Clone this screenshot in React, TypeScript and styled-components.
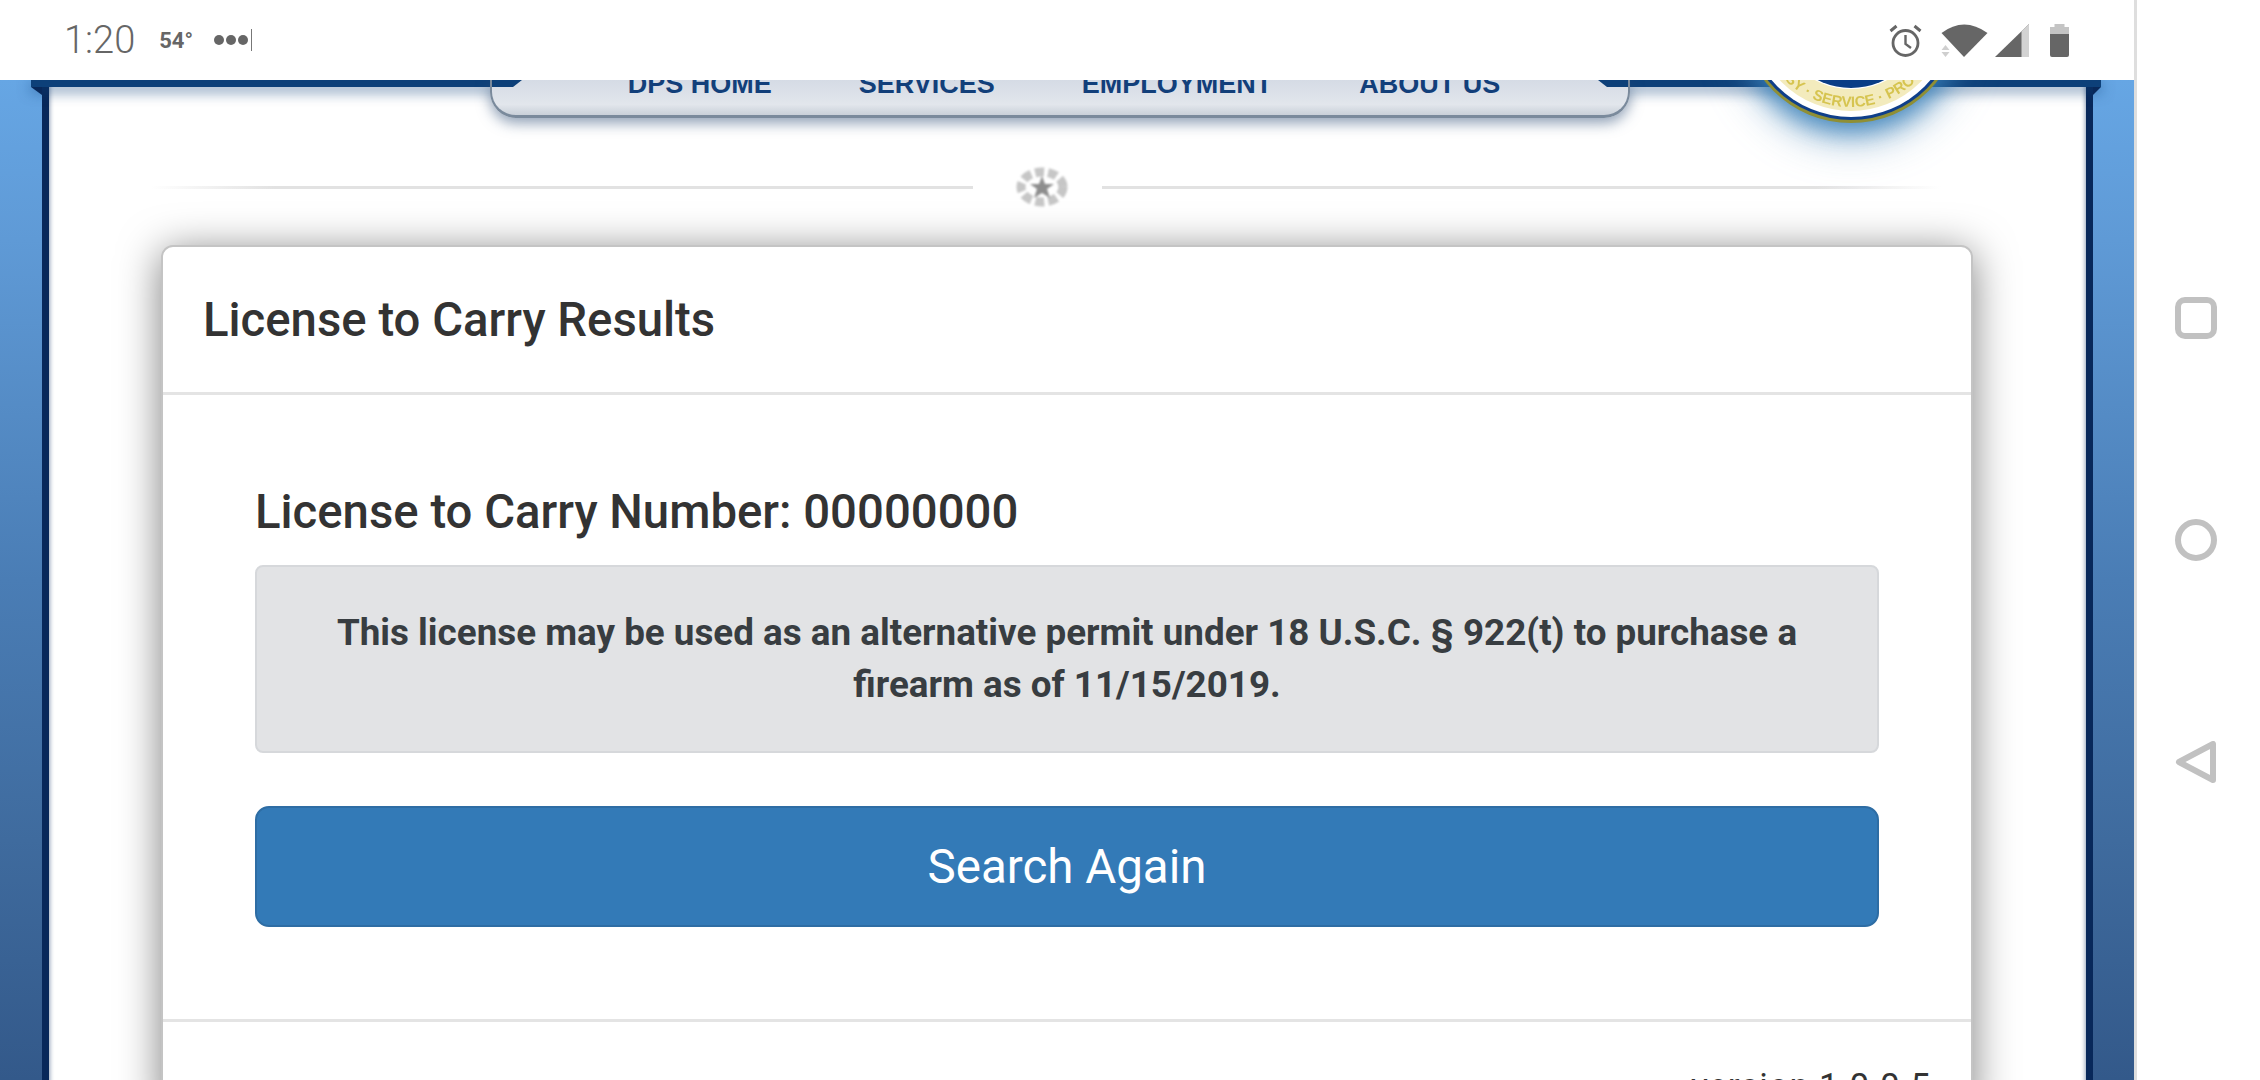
import React from 'react';
import styled, { createGlobalStyle } from 'styled-components';

const GlobalStyle = createGlobalStyle`
  html, body {
    margin: 0;
    padding: 0;
    background: #fff;
    overflow: hidden;
  }
`;

const Device = styled.div`
  width: 2260px;
  height: 1080px;
  display: flex;
  overflow: hidden;
  font-family: Roboto, sans-serif;
`;

const Screen = styled.div`
  width: 2134px;
  display: flex;
  flex-direction: column;
  border-right: 3px solid #dedede;
`;

const StatusBar = styled.div`
  position: relative;
  z-index: 2;
  height: 80px;
  flex: none;
  box-sizing: border-box;
  padding: 0 65px 0 64px;
  display: flex;
  align-items: center;
  background: #fff;
  color: #666;
`;

const Clock = styled.span`
  font-size: 38px;
  font-weight: 300;
  margin-right: 24px;
`;

const Temp = styled.span`
  font-size: 22px;
  font-weight: 700;
  margin-right: 21px;
`;

const Dots = styled.span`
  display: flex;
  align-items: center;
  gap: 2px;
  flex: 1;
`;

const Dot = styled.i`
  width: 10px;
  height: 10px;
  border-radius: 50%;
  background: #666;
`;

const Tick = styled.i`
  width: 1px;
  height: 22px;
  margin-left: 1px;
  background: #777;
`;

const StatusIcons = styled.div`
  display: flex;
  align-items: center;
`;

const Backdrop = styled.div`
  flex: 1;
  min-height: 0;
  padding: 0 41px 0 42px;
  background: linear-gradient(#66a6e4 0, #5f9ad6 160px, #4a7db5 500px, #3f6b9e 760px, #33598a 1000px);
`;

const Panel = styled.div`
  position: relative;
  height: 1100px;
  background: #fff;
  border-left: 7px solid #08285a;
  border-right: 7px solid #08285a;
  box-shadow: inset 4px 0 4px -3px rgba(11, 47, 98, 0.45), inset -4px 0 4px -3px rgba(11, 47, 98, 0.45);
`;

const TopBar = styled.div`
  position: relative;
  height: 7px;
  margin: 0 -15px 0 -18px;
  background: #0d4079;
  box-shadow: 0 4px 14px rgba(13, 64, 121, 0.7);

  &::before,
  &::after {
    content: '';
    position: absolute;
    top: 7px;
    border-top: 8px solid #08285a;
  }

  &::before {
    left: 0;
    border-right: 11px solid transparent;
    transform: scaleX(-1);
  }

  &::after {
    right: 0;
    border-right: 8px solid transparent;
  }
`;

const NavTab = styled.nav`
  width: 1140px;
  height: 38px;
  margin: -7px 0 0 441px;
  padding-left: 8px;
  position: relative;
  box-sizing: border-box;
  display: flex;
  justify-content: center;
  gap: 87px;
  overflow: hidden;
  background: linear-gradient(#d5dbe5, #e2e6ec 70%, #c9d0d9);
  border: solid #7a8a9c;
  border-width: 0 2px 3px;
  border-radius: 0 0 26px 26px;
  box-shadow: 0 5px 14px rgba(50, 80, 120, 0.55);

  &::before,
  &::after {
    content: '';
    position: absolute;
    top: 0;
    width: 30px;
    height: 7px;
    background: #0d4079;
  }

  &::before {
    left: 0;
    clip-path: polygon(0 0, 100% 0, 70% 100%, 0 100%);
  }

  &::after {
    right: 0;
    clip-path: polygon(0 0, 100% 0, 100% 100%, 30% 100%);
  }
`;

const NavLink = styled.span`
  font-family: "Liberation Sans", Arial, sans-serif;
  font-weight: 700;
  font-size: 27px;
  line-height: 27px;
  margin-top: -9px;
  color: #123f7a;
  white-space: nowrap;
`;

const Seal = styled.svg`
  position: absolute;
  left: 1692px;
  top: -177px;
  filter: blur(0.7px) drop-shadow(0 8px 12px rgba(50, 125, 185, 0.85)) drop-shadow(0 10px 18px rgba(70, 130, 180, 0.45));
`;

const Divider = styled.div`
  margin: 49px 145px 0 102px;
  height: 32px;
  display: grid;
  grid-template-columns: 822px 129px 1fr;
  align-items: center;
`;

const Rule = styled.div<{ $flip?: boolean }>`
  height: 3px;
  background: linear-gradient(${(p) => (p.$flip ? '270deg' : '90deg')}, rgba(222, 222, 222, 0), #e2e2e2 15%);
`;

const BadgeSlot = styled.div`
  display: flex;
  justify-content: center;
  padding-left: 9px;
`;

const Card = styled.section`
  width: 1812px;
  margin: 46px 0 0 112px;
  box-sizing: border-box;
  background: #fff;
  border: 2px solid #c4c4c4;
  border-radius: 12px 12px 0 0;
  box-shadow: 0 6px 42px rgba(0, 0, 0, 0.5);
`;

const CardHeader = styled.header`
  height: 148px;
  box-sizing: border-box;
  padding-left: 40px;
  display: flex;
  align-items: center;
  border-bottom: 3px solid #e4e4e4;
  font-size: 47.3px;
  font-weight: 500;
  color: #333;
`;

const CardBody = styled.div`
  height: 627px;
  box-sizing: border-box;
  padding: 90px 92px 0;
  border-bottom: 3px solid #e4e4e4;
`;

const LicenseNumber = styled.h3`
  margin: 0 0 26px;
  font-size: 47.3px;
  line-height: 54px;
  font-weight: 500;
  color: #333;
`;

const Notice = styled.div`
  height: 188px;
  box-sizing: border-box;
  padding: 0 60px;
  display: flex;
  align-items: center;
  justify-content: center;
  text-align: center;
  background: #e2e3e5;
  border: 2px solid #d6d8db;
  border-radius: 8px;
  font-size: 36.8px;
  line-height: 52px;
  font-weight: 700;
  color: #383d41;
`;

const SearchButton = styled.button`
  width: 100%;
  height: 121px;
  margin-top: 53px;
  border: 2px solid #2e6da4;
  border-radius: 14px;
  background: #337ab7;
  color: #fff;
  font-family: Roboto, sans-serif;
  font-size: 47.5px;
`;

const Version = styled.div`
  padding: 42px 40px 0 0;
  text-align: right;
  font-size: 35px;
  line-height: 46px;
  letter-spacing: 0.8px;
  color: #333;
`;

const NavRail = styled.div`
  flex: 1;
  display: flex;
  flex-direction: column;
  align-items: center;
  padding: 297px 5px 0 0;
  gap: 180px;
  background: #fff;
`;

const Alarm = () => (
  <svg width="33" height="33" viewBox="0 0 33 33" fill="none" stroke="#666" strokeWidth="2.8" style={{ marginRight: 19 }}>
    <circle cx="16.500" cy="19" r="12.500" />
    <path d="M16.500 11v9l5.500 4" strokeWidth="2.400" />
    <path d="M1.500 7l6-5M31.500 7l-6-5" strokeWidth="3" />
  </svg>
);

const Wifi = () => (
  <svg width="47" height="33" viewBox="0 0 47 33" style={{ marginRight: 7 }}>
    <path d="M23 33L0.500 9Q23-8 46.500 9z" fill="#666" />
    <path d="M4.500 21l4 5h-8zM4.500 33l4-5h-8z" fill="#cfcfcf" />
  </svg>
);

const Signal = () => (
  <svg width="34" height="33" viewBox="0 0 34 33" style={{ marginRight: 21 }}>
    <path d="M0 33L34 0v33z" fill="#666" />
    <path d="M26.500 7.300L34 0v33h-7.500z" fill="#d2d2d2" />
  </svg>
);

const Battery = () => (
  <svg width="19" height="33" viewBox="0 0 19 33">
    <path d="M4.500 0h10v3h4.500v8H0V3h4.500z" fill="#c4c4c4" />
    <path d="M0 10h19v21a2 2 0 0 1-2 2H2a2 2 0 0 1-2-2z" fill="#666" />
  </svg>
);

const NavSquare = () => (
  <svg width="42" height="42" viewBox="0 0 42 42" fill="none" stroke="#c1c1c1" strokeWidth="6">
    <rect x="3" y="3" width="36" height="36" rx="7" />
  </svg>
);

const NavCircle = () => (
  <svg width="42" height="42" viewBox="0 0 42 42" fill="none" stroke="#c1c1c1" strokeWidth="6">
    <circle cx="21" cy="21" r="18" />
  </svg>
);

const NavBack = () => (
  <svg width="42" height="42" viewBox="0 0 42 42" fill="none" stroke="#c1c1c1" strokeWidth="6" strokeLinejoin="round">
    <path d="M38 3v36L4 21z" />
  </svg>
);

const StarBadge = () => (
  <svg width="52" height="40" viewBox="0 0 52 40" style={{ filter: 'blur(1.2px)' }}>
    <ellipse cx="26" cy="20" rx="21" ry="15" fill="none" stroke="#c6c6c6" strokeWidth="9" strokeDasharray="9 4" />
    <path d="M26 9l3 8h9l-7 5 3 9-8-5-8 5 3-9-7-5h9z" fill="#8d8d8d" />
  </svg>
);

const SealMark = () => (
  <Seal width="220" height="220" viewBox="0 0 220 220">
    <circle cx="110" cy="110" r="110" fill="#8f8f35" />
    <circle cx="110" cy="110" r="107" fill="#0f3f8a" />
    <circle cx="110" cy="110" r="104" fill="#fff" />
    <circle cx="110" cy="110" r="87" fill="none" stroke="#f3ebbd" strokeWidth="22" />
    <circle cx="110" cy="110" r="75" fill="#0a3d86" />
    <circle cx="110" cy="110" r="67" fill="#8a8a5c" />
    <defs>
      <path id="seal-arc" d="M16 110a94 94 0 0 0 188 0" />
    </defs>
    <text fontFamily="Liberation Sans, sans-serif" fontSize="15" fontWeight="700" fill="#d6c450" textAnchor="middle">
      <textPath href="#seal-arc" startOffset="50%">COURTESY · SERVICE · PROTECTION</textPath>
    </text>
  </Seal>
);

const App = () => (
  <Device>
    <GlobalStyle />
    <Screen>
      <StatusBar>
        <Clock>1:20</Clock>
        <Temp>54°</Temp>
        <Dots>
          <Dot />
          <Dot />
          <Dot />
          <Tick />
        </Dots>
        <StatusIcons>
          <Alarm />
          <Wifi />
          <Signal />
          <Battery />
        </StatusIcons>
      </StatusBar>
      <Backdrop>
        <Panel>
          <TopBar />
          <NavTab>
            <NavLink>DPS HOME</NavLink>
            <NavLink>SERVICES</NavLink>
            <NavLink>EMPLOYMENT</NavLink>
            <NavLink>ABOUT US</NavLink>
          </NavTab>
          <SealMark />
          <Divider>
            <Rule />
            <BadgeSlot>
              <StarBadge />
            </BadgeSlot>
            <Rule $flip />
          </Divider>
          <Card>
            <CardHeader>License to Carry Results</CardHeader>
            <CardBody>
              <LicenseNumber>License to Carry Number: 00000000</LicenseNumber>
              <Notice>
                This license may be used as an alternative permit under 18 U.S.C. § 922(t) to purchase a firearm as of 11/15/2019.
              </Notice>
              <SearchButton>Search Again</SearchButton>
            </CardBody>
            <Version>version 1.0.0.5</Version>
          </Card>
        </Panel>
      </Backdrop>
    </Screen>
    <NavRail>
      <NavSquare />
      <NavCircle />
      <NavBack />
    </NavRail>
  </Device>
);

export default App;
